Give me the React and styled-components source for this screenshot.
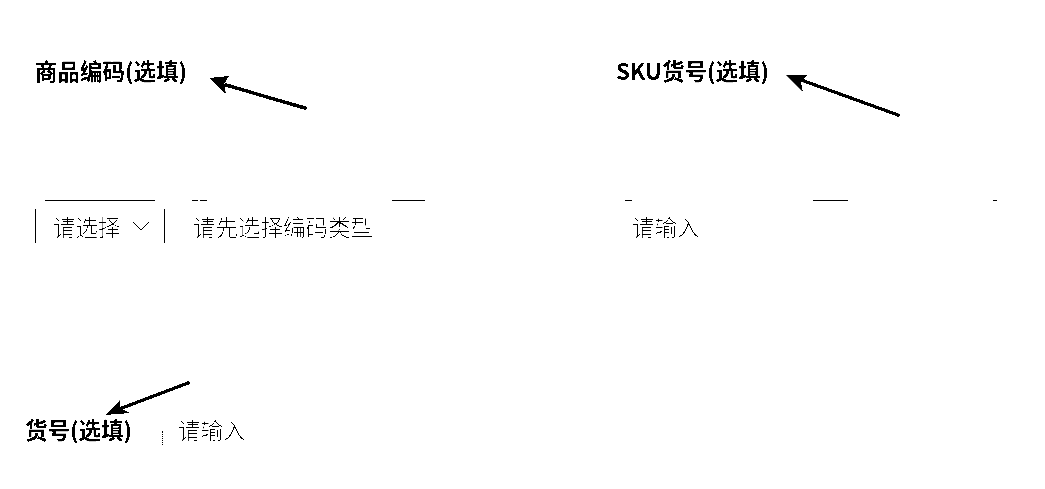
import React from "react";
import styled, { createGlobalStyle } from "styled-components";

const Global = createGlobalStyle`
  html, body { margin: 0; padding: 0; background: #fff; }
  body { font-family: "Noto Sans CJK SC", "Noto Sans", sans-serif; }
`;

// the reference is a two-tone scan, so push everything to black or white
const Page = styled.div`
  position: relative;
  width: 1045px;
  height: 489px;
  overflow: hidden;
  background: #fff;
  filter: grayscale(1) contrast(30);
`;

const TopGrid = styled.div`
  display: grid;
  grid-template-columns: 581px 1fr;
  padding: 54px 0 0 35px;
`;

const Label = styled.div`
  font-size: 22.5px;
  line-height: 32px;
  font-weight: 700;
  color: #000;
  white-space: nowrap;
`;

const FormRow = styled.div`
  margin-top: 114px;
  height: 44px;
`;

const EdgeStrip = styled.div`
  display: flex;
  height: 1px;
`;

const Edge = styled.i`
  display: block;
  height: 1px;
  width: ${(p) => p.$w}px;
  margin-left: ${(p) => p.$gap}px;
  background: #000;
`;

const Controls = styled.div`
  display: flex;
  align-items: center;
  margin: 8px 0 0 35px;
  height: 34px;
`;

const Select = styled.div`
  box-sizing: border-box;
  width: 130px;
  height: 34px;
  display: flex;
  align-items: center;
  padding-left: 17px;
  border-left: 1px solid #000;
  border-right: 1px solid #000;
`;

const Placeholder = styled.span`
  font-size: 22.5px;
  line-height: 34px;
  font-weight: 300;
  color: #4a4a4a;
  white-space: nowrap;
  margin-left: ${(p) => p.$left || 0}px;
`;

const Chevron = styled.svg`
  width: 18px;
  height: 11px;
  margin-left: 11px;
  flex: none;
`;

const BottomRow = styled.div`
  display: flex;
  align-items: center;
  margin: 168px 0 0 25px;
`;

const Speck = styled.i`
  display: block;
  width: 1px;
  height: 14px;
  margin: 18px 0 0 30px;
  border-left: 1px dotted #000;
`;

const Arrows = styled.svg`
  position: absolute;
  left: 0;
  top: 0;
  width: 1045px;
  height: 489px;
  pointer-events: none;
`;

const edges = [
  [110, 45], [6, 37], [7, 2], [33, 185], [7, 200], [35, 181], [4, 145],
];

const Arrow = ({ d, head }) => (
  <g>
    <path d={d} fill="none" stroke="#000" strokeWidth="3.4" strokeLinecap="round" />
    <path d={head} fill="#000" fillRule="evenodd" />
  </g>
);

export default function App() {
  return (
    <Page>
      <Global />
      <TopGrid>
        <Label>商品编码(选填)</Label>
        <Label>SKU货号(选填)</Label>
      </TopGrid>
      <FormRow>
        <EdgeStrip>
          {edges.map(([w, gap], i) => (
            <Edge key={i} $w={w} $gap={gap} />
          ))}
        </EdgeStrip>
        <Controls>
          <Select>
            <Placeholder>请选择</Placeholder>
            <Chevron viewBox="0 0 18 11">
              <path d="M1 1l8 8 8-8" fill="none" stroke="#000" strokeWidth="1.2" />
            </Chevron>
          </Select>
          <Placeholder $left={28}>请先选择编码类型</Placeholder>
          <Placeholder $left={259}>请输入</Placeholder>
        </Controls>
      </FormRow>
      <BottomRow>
        <Label>货号(选填)</Label>
        <Speck />
        <Placeholder $left={14}>请输入</Placeholder>
      </BottomRow>
      <Arrows viewBox="0 0 1045 489">
        <Arrow d="M305 108L226 85" head="M209 78L229 76L224 84L226 94Z" />
        <Arrow d="M898 115L804 81" head="M786 75L807 75L801 83L803 92Z" />
        <Arrow d="M188 383L122 408" head="M105 415L120 400L120 408L130 413Z" />
      </Arrows>
    </Page>
  );
}
